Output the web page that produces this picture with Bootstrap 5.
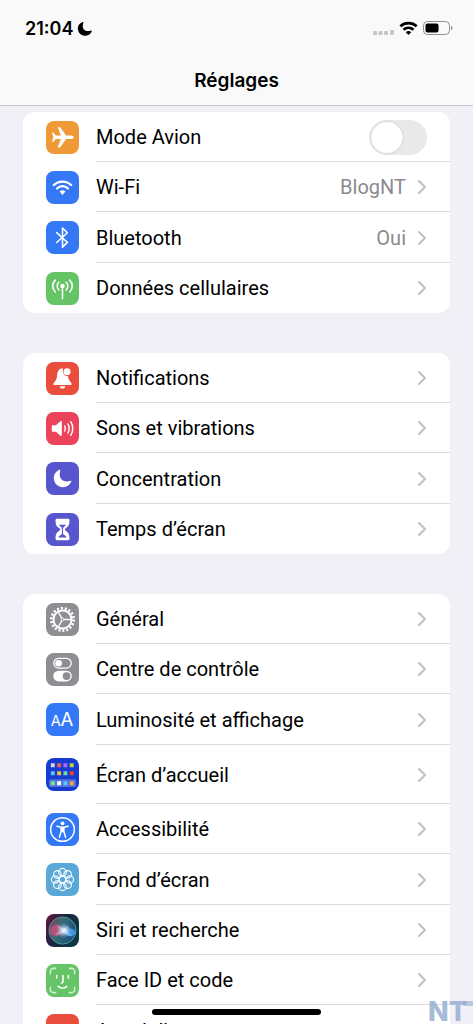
<!DOCTYPE html>
<html lang="fr">
<head>
<meta charset="utf-8">
<meta name="viewport" content="width=device-width, initial-scale=1">
<title>Réglages</title>
<link href="https://cdn.jsdelivr.net/npm/bootstrap@5.3.0/dist/css/bootstrap.min.css" rel="stylesheet">
<style>
  body { font-family: Inter, "Liberation Sans", sans-serif; font-size: 19px; line-height: 24px; color: #000; background: #f1f0f6; }
  .topbar { background: #f9f9fa; border-bottom: 1px solid #c4c4c8; }
  .status { padding: 17px 20px 0 25px; height: 68px; }
  .clock { font-size: 18px; font-weight: 600; }
  .title { font-size: 19px; line-height: 26px; font-weight: 600; height: 37px; }
  .settings { padding: 6px 23px 0; gap: 40px; }
  .group { flex: none; background: #fff; border-radius: 12px; }
  .entry { min-height: 50px; padding-left: 23px; color: #000; gap: 17px; text-decoration: none; }
  .entry:nth-child(3n) { min-height: 51px; }
  .entry-body { padding: 1px 23px 0 0; gap: 11px; border-bottom: 1px solid #dcdcde; font-family: Roboto, "Liberation Sans", sans-serif; font-size: 20px; }
  .entry:last-child .entry-body { border-color: transparent; }
  .tall { min-height: 59px; }
  .tile { width: 33px; height: 33px; border-radius: 8px; flex: none; overflow: hidden; }
  .tile svg { width: 33px; height: 33px; display: block; }
  .tile text { font-weight: 400; fill: #fff; }
  .value { color: #8a8a8e; }
  .chev { width: 10px; height: 16px; flex: none; }
  .orange { background: #f09a37; } .blue { background: #3478f6; } .green { background: #65c466; }
  .red { background: #eb4d3d; } .pink { background: #eb445a; } .violet { background: #5756ce; }
  .gray { background: #8e8e93; } .home { background: #153bd0; } .sky { background: #59a8d8; }
  .switch .form-check-input { width: 58px; height: 35px; margin: 0; float: none; border: 0; background-color: #e9e9ea; border-radius: 18px; background-image: radial-gradient(circle, #fff 0 15px, #dedee0 16px, #e9e9ea00 18px); background-size: 36px 36px; background-position: left center; }
  .homebar { left: 50%; bottom: 9px; width: 169px; height: 6px; margin-left: -85px; border-radius: 3px; background: #000; z-index: 5; }
  .watermark { right: 0; bottom: 0; width: 45px; height: 28px; z-index: 4; font-weight: 800; }
</style>
</head>
<body>
<svg class="d-none" aria-hidden="true">
  <symbol id="chev" viewBox="0 0 10 16"><path d="M2 2l6 6-6 6" fill="none" stroke="#c0c0c3" stroke-width="2" stroke-linecap="round" stroke-linejoin="round"/></symbol>
</svg>
<div class="vh-100 d-flex flex-column overflow-hidden position-relative">
  <header class="topbar flex-shrink-0">
    <div class="status d-flex justify-content-between align-items-start">
      <div class="d-flex align-items-center gap-1">
        <span class="clock">21:04</span>
        <svg width="16" height="16" viewBox="0 0 16 16"><path d="M5.500 1C1.800 2.500.5 5.500 1 8.800c.6 3.600 3.500 6 7 6 3 0 5.600-1.700 6.800-4.600.2-.6-.3-.9-.8-.7-6 2-9.800-2.200-7.700-7.600.3-.6-.2-1.100-.8-.9z"/></svg>
      </div>
      <svg width="81" height="24" viewBox="0 0 81 24">
        <g fill="#c6c6c8"><rect x="1" y="14" width="4" height="4" rx="1"/><rect x="6.500" y="14" width="4" height="4" rx="1"/><rect x="12" y="14" width="4" height="4" rx="1"/><rect x="18" y="13" width="4" height="5" rx="1"/></g>
        <g fill="none" stroke="#000" stroke-width="2.600"><path d="M28.300 9.300a12.300 12.300 0 0 1 16.400 0M31.500 12.700a7.500 7.500 0 0 1 10 0"/></g><path d="M33.800 15.300a4 4 0 0 1 5.400 0L36.500 18z"/>
        <rect x="51.500" y="4.500" width="26" height="13" rx="4" fill="none" stroke="#8e8e90"/><rect x="53.500" y="6.500" width="13" height="9" rx="2"/><path d="M79 9c2 .5 2 3.500 0 4z" fill="#8e8e90"/>
      </svg>
    </div>
    <h1 class="title text-center m-0">Réglages</h1>
  </header>

  <main class="settings d-flex flex-column flex-grow-1 overflow-hidden">
    <div class="group d-flex flex-column">
      <div class="entry d-flex">
        <span class="tile orange align-self-center"><svg viewBox="0 0 34 34"><path fill="#fff" d="M28.500 16.700c0 1-1.200 1.800-2.600 1.800h-5.200l-5.900 8.200c-.3.400-.7.600-1.200.6h-.8c-.4 0-.6-.4-.4-.9l2.900-7.900H10l-2 2.600c-.2.300-.4.400-.8.400h-.4c-.3 0-.5-.2-.4-.5L7.500 16.700 6.400 12.400c-.1-.3.100-.5.400-.5h.4c.4 0 .6.100.8.400l2 2.600h5.300l-2.900-7.900c-.2-.5 0-.9.400-.9h.8c.5 0 .9.200 1.200.6l5.900 8.200h5.200c1.400 0 2.600.8 2.600 1.800z"/></svg></span>
        <div class="entry-body switch flex-grow-1 d-flex align-items-center justify-content-between">
          <label for="avion">Mode Avion</label><input class="form-check-input" type="checkbox" role="switch" id="avion">
        </div>
      </div>
      <a href="#" class="entry d-flex"><span class="tile blue align-self-center"><svg viewBox="0 0 34 34"><g fill="none" stroke="#fff" stroke-width="2.300" stroke-linecap="round"><path d="M8 14.500a13 13 0 0 1 18 0M11.300 18a8.200 8.200 0 0 1 11.400 0"/></g><path fill="#fff" d="M14 21.200a4.300 4.300 0 0 1 6 0L17 24.700z"/></svg></span>
        <span class="entry-body flex-grow-1 d-flex align-items-center"><span class="me-auto">Wi-Fi</span><span class="value">BlogNT</span><svg class="chev"><use href="#chev"/></svg></span></a>
      <a href="#" class="entry d-flex"><span class="tile blue align-self-center"><svg viewBox="0 0 34 34"><path fill="none" stroke="#fff" stroke-width="1.600" stroke-linejoin="round" stroke-linecap="round" d="M11 12l11 10-5 4.900V7.200l5 4.900-11 10"/></svg></span>
        <span class="entry-body flex-grow-1 d-flex align-items-center"><span class="me-auto">Bluetooth</span><span class="value">Oui</span><svg class="chev"><use href="#chev"/></svg></span></a>
      <a href="#" class="entry d-flex"><span class="tile green align-self-center"><svg viewBox="0 0 34 34"><circle cx="17" cy="14.500" r="2.300" fill="#fff"/><path fill="none" stroke="#fff" stroke-width="1.600" stroke-linecap="round" d="M17 15v12.500M13.200 10.600a5.400 5.400 0 0 0 0 7.800M20.800 10.600a5.400 5.400 0 0 1 0 7.800M9.600 8.400c-3.600 3.500-3.600 8.700 0 12.200M24.400 8.400c3.600 3.500 3.600 8.700 0 12.200"/></svg></span>
        <span class="entry-body flex-grow-1 d-flex align-items-center"><span class="me-auto">Données cellulaires</span><svg class="chev"><use href="#chev"/></svg></span></a>
    </div>

    <div class="group d-flex flex-column">
      <a href="#" class="entry d-flex"><span class="tile red align-self-center"><svg viewBox="0 0 34 34"><path fill="#fff" d="M17.500 6.500c-4 0-5.700 3-6 6.700-.3 4-.8 5.400-3.200 7.800-1.300 1.400-.8 2.800.7 2.800h16c1.500 0 2-1.400.7-2.800-1.900-2-2.600-3.300-3-6.300-3 .5-6.100-2.600-5.200-8.200zM14 25h6c-.3 1.600-1.400 2.400-3 2.400s-2.700-.8-3-2.400z"/><circle cx="21.700" cy="10" r="3.600" fill="#fff"/></svg></span>
        <span class="entry-body flex-grow-1 d-flex align-items-center"><span class="me-auto">Notifications</span><svg class="chev"><use href="#chev"/></svg></span></a>
      <a href="#" class="entry d-flex"><span class="tile pink align-self-center"><svg viewBox="0 0 34 34"><path fill="#fff" d="M6 14.700c0-.7.400-1.100 1.100-1.100h3.200l4.500-4c.9-.7 1.500-.4 1.500.6v13.600c0 1-.6 1.300-1.500.6l-4.500-4H7.100c-.7 0-1.100-.4-1.100-1.100z"/><path fill="none" stroke="#fff" stroke-width="1.500" stroke-linecap="round" d="M19.300 14.400c1 1.700 1 3.500 0 5.200M22.500 12.300c1.800 3 1.800 6.400 0 9.400M25.500 10c2.800 4.600 2.800 9.400 0 14"/></svg></span>
        <span class="entry-body flex-grow-1 d-flex align-items-center"><span class="me-auto">Sons et vibrations</span><svg class="chev"><use href="#chev"/></svg></span></a>
      <a href="#" class="entry d-flex"><span class="tile violet align-self-center"><svg viewBox="0 0 34 34"><path fill="#fff" d="M13.800 8C9.700 9.900 7.700 13.200 8.100 17.500c.5 4.800 4.400 8.500 9.300 8.500 3.900 0 7.200-2.300 8.700-5.900.3-.7-.2-1.100-.9-.8-7.500 2.600-13-2.600-10.500-10.400.2-.7-.2-1.100-.9-.9z"/></svg></span>
        <span class="entry-body flex-grow-1 d-flex align-items-center"><span class="me-auto">Concentration</span><svg class="chev"><use href="#chev"/></svg></span></a>
      <a href="#" class="entry d-flex"><span class="tile violet align-self-center"><svg viewBox="0 0 34 34"><path fill="#fff" d="M11.300 6h11.400c.9 0 1.500.6 1.500 1.500 0 5-1.200 6.600-4.200 8.500-.7.500-.7 1.500 0 2 3 1.900 4.200 3.500 4.200 8.500 0 .9-.6 1.500-1.500 1.500H11.300c-.9 0-1.500-.6-1.500-1.500 0-5 1.200-6.600 4.200-8.500.7-.5.700-1.500 0-2-3-1.900-4.200-3.500-4.200-8.500 0-.9.600-1.500 1.500-1.500z"/><path fill="#5756ce" d="M13.300 12h7.400c-.5 1-1.300 1.700-2.300 2.500-.6.500-.8 1.100-.8 2.300v4c0 .9.400 1.300 1.300 1.900 1.200.8 1.900 1.400 2.200 2.500h-8.200c.3-1.100 1-1.700 2.200-2.500.9-.6 1.300-1 1.300-1.900v-4c0-1.200-.2-1.800-.8-2.300-1-.8-1.800-1.500-2.300-2.500z"/></svg></span>
        <span class="entry-body flex-grow-1 d-flex align-items-center"><span class="me-auto">Temps d’écran</span><svg class="chev"><use href="#chev"/></svg></span></a>
    </div>

    <div class="group d-flex flex-column">
      <a href="#" class="entry d-flex"><span class="tile gray align-self-center"><svg viewBox="0 0 34 34" fill="none" stroke="#fff"><circle cx="17" cy="17" r="11.500" stroke-width="2.800" stroke-dasharray="2.100 1.912"/><circle cx="17" cy="17" r="9.300" stroke-width="2"/><path stroke-width="1.500" d="M17 17h9M17 17l-4.500-8M17 17l-4.500 8"/><circle cx="17" cy="17" r="1.500" fill="#8e8e93"/></svg></span>
        <span class="entry-body flex-grow-1 d-flex align-items-center"><span class="me-auto">Général</span><svg class="chev"><use href="#chev"/></svg></span></a>
      <a href="#" class="entry d-flex"><span class="tile gray align-self-center"><svg viewBox="0 0 34 34"><rect x="8" y="5.500" width="18" height="10" rx="5" fill="none" stroke="#fff" stroke-width="1.300"/><circle cx="13" cy="10.500" r="3.400" fill="#fff"/><rect x="7.400" y="18.300" width="19.200" height="11" rx="5.500" fill="#fff"/><circle cx="21.200" cy="23.800" r="4" fill="#8e8e93"/></svg></span>
        <span class="entry-body flex-grow-1 d-flex align-items-center"><span class="me-auto">Centre de contrôle</span><svg class="chev"><use href="#chev"/></svg></span></a>
      <a href="#" class="entry d-flex"><span class="tile blue align-self-center"><svg viewBox="0 0 34 34" aria-hidden="true"><text x="5" y="24" font-size="15">A</text><text x="15" y="24" font-size="19">A</text></svg></span>
        <span class="entry-body flex-grow-1 d-flex align-items-center"><span class="me-auto">Luminosité et affichage</span><svg class="chev"><use href="#chev"/></svg></span></a>
      <a href="#" class="entry tall d-flex"><span class="tile home align-self-center"><svg viewBox="0 0 34 34"><rect x="3" y="22" width="28" height="8" rx="2" fill="#5371df"/><path fill="#d9d9de" d="M5 5.500h4v4H5z"/><path fill="#f2585c" d="M11.500 5.500h4v4h-4z"/><path fill="#ac66f2" d="M18 5.500h4v4h-4z"/><path fill="#b8d438" d="M24.500 5.500h4v4h-4z"/><path fill="#5bc4f5" d="M5 13.700h4v4H5z"/><path fill="#fbc02f" d="M11.500 13.700h4v4h-4z"/><path fill="#69dca0" d="M18 13.700h4v4h-4z"/><path fill="#f2402f" d="M24.500 13.700h4v4h-4z"/><path fill="#7fe981" d="M5 24h4v4H5z"/><path fill="#fff" d="M11.500 24h4v4h-4z"/><path fill="#58c8f5" d="M18 24h4v4h-4z"/><path fill="#f9a048" d="M24.500 24h4v4h-4z"/></svg></span>
        <span class="entry-body flex-grow-1 d-flex align-items-center"><span class="me-auto">Écran d’accueil</span><svg class="chev"><use href="#chev"/></svg></span></a>
      <a href="#" class="entry d-flex"><span class="tile blue align-self-center"><svg viewBox="0 0 34 34"><circle cx="17" cy="17" r="12.200" fill="none" stroke="#fff" stroke-width="1.500"/><circle cx="17" cy="10.600" r="1.900" fill="#fff"/><path fill="none" stroke="#fff" stroke-width="1.500" stroke-linecap="round" stroke-linejoin="round" d="M11.200 13.600l4.300 1h3l4.300-1M15.600 15v4l-1.800 6M18.400 15v4l1.800 6"/><path fill="#fff" d="M15.300 14.500h3.400v4.500l-1.700 1-1.700-1z"/></svg></span>
        <span class="entry-body flex-grow-1 d-flex align-items-center"><span class="me-auto">Accessibilité</span><svg class="chev"><use href="#chev"/></svg></span></a>
      <a href="#" class="entry d-flex"><span class="tile sky align-self-center"><svg viewBox="0 0 34 34" fill="none" stroke="#fff" stroke-width="1.200"><circle cx="17" cy="9.500" r="3.900"/><circle cx="22.300" cy="11.700" r="3.900"/><circle cx="24.500" cy="17" r="3.900"/><circle cx="22.300" cy="22.300" r="3.900"/><circle cx="17" cy="24.500" r="3.900"/><circle cx="11.700" cy="22.300" r="3.900"/><circle cx="9.500" cy="17" r="3.900"/><circle cx="11.700" cy="11.700" r="3.900"/><circle cx="17" cy="17" r="3.400"/></svg></span>
        <span class="entry-body flex-grow-1 d-flex align-items-center"><span class="me-auto">Fond d’écran</span><svg class="chev"><use href="#chev"/></svg></span></a>
      <a href="#" class="entry d-flex"><span class="tile align-self-center"><svg viewBox="0 0 34 34"><defs><linearGradient id="sbg" x2="1" y2=".5"><stop stop-color="#68163c"/><stop offset=".5" stop-color="#1d2442"/><stop offset="1" stop-color="#0c3842"/></linearGradient><linearGradient id="sorb" x2="1" y2=".4"><stop stop-color="#b83169"/><stop offset=".45" stop-color="#478c87"/><stop offset="1" stop-color="#245b9d"/></linearGradient><radialGradient id="sglow"><stop stop-color="#fff"/><stop offset=".3" stop-color="#dcecff" stop-opacity=".8"/><stop offset="1" stop-color="#79b9ec" stop-opacity="0"/></radialGradient></defs><rect width="34" height="34" fill="url(#sbg)"/><circle cx="17" cy="17" r="14" fill="url(#sorb)" fill-opacity=".7" stroke="#4a9f91" stroke-width="1"/><ellipse cx="11" cy="17" rx="7" ry="6" fill="#ee497d" fill-opacity=".65"/><ellipse cx="25" cy="19" rx="5.500" ry="4" fill="#46a9f3" fill-opacity=".8"/><path fill="#dff5f8" fill-opacity=".4" d="M10 11l8 4 6-3-3 5 7 7-9-5-10 3 6-6z"/><circle cx="18.500" cy="17" r="8" fill="url(#sglow)"/></svg></span>
        <span class="entry-body flex-grow-1 d-flex align-items-center"><span class="me-auto">Siri et recherche</span><svg class="chev"><use href="#chev"/></svg></span></a>
      <a href="#" class="entry d-flex"><span class="tile green align-self-center"><svg viewBox="0 0 34 34" fill="none" stroke="#fff" stroke-width="1.600" stroke-linecap="round"><path stroke-opacity=".7" d="M4.500 10V7.500a3 3 0 0 1 3-3H10M24 4.500h2.500a3 3 0 0 1 3 3V10M29.500 24v2.500a3 3 0 0 1-3 3H24M10 29.500H7.500a3 3 0 0 1-3-3V24"/><path d="M11 12v2.500M23 12v2.500M17.500 12v6c0 1-.5 1.500-1.600 1.500M12.500 23c2.600 2.300 6.400 2.300 9 0"/></svg></span>
        <span class="entry-body flex-grow-1 d-flex align-items-center"><span class="me-auto">Face ID et code</span><svg class="chev"><use href="#chev"/></svg></span></a>
      <a href="#" class="entry d-flex"><span class="tile red align-self-center"></span>
        <span class="entry-body flex-grow-1 d-flex align-items-center"><span class="me-auto">Appel d’urgence</span><svg class="chev"><use href="#chev"/></svg></span></a>
    </div>
  </main>
  <div class="homebar position-absolute"></div>
  <svg class="watermark position-absolute" viewBox="0 0 45 28"><rect x="35" y="5" width="10" height="5" fill="#b9c6de"/><text x="0" y="25" font-size="27" fill="#8fa9cf" fill-opacity=".8">NT</text></svg>
</div>
<script src="https://cdn.jsdelivr.net/npm/bootstrap@5.3.0/dist/js/bootstrap.bundle.min.js"></script>
</body>
</html>
